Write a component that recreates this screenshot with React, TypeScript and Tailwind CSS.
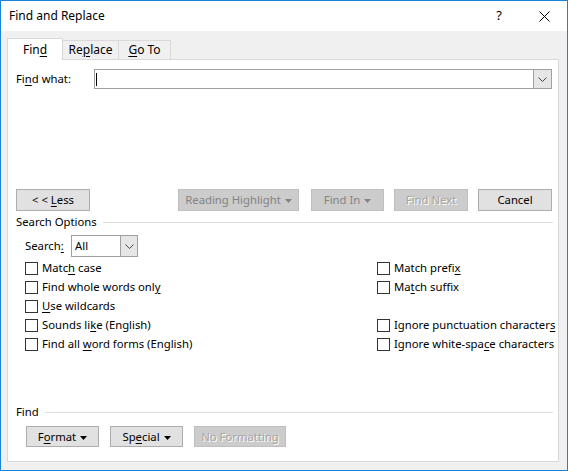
import React from 'react';

const font = "font-['Segoe_UI','Noto_Sans',sans-serif]";

function Key({ children }: { children: React.ReactNode }) {
  return <span className="underline underline-offset-2 decoration-1">{children}</span>;
}

function Caret({ color = '#000' }: { color?: string }) {
  return (
    <svg width="7" height="4" viewBox="0 0 7 4" className="ml-[4px] inline-block align-middle">
      <path d="M0 0h7L3.5 4z" fill={color} />
    </svg>
  );
}

function Chevron() {
  return (
    <svg width="9" height="5" viewBox="0 0 9 5">
      <path d="M0.5 0.5L4.5 4.5L8.5 0.5" fill="none" stroke="#444" strokeWidth="1" />
    </svg>
  );
}

function Btn({
  children,
  w,
  h = 'h-[22px]',
  state = 'normal',
}: {
  children: React.ReactNode;
  w: string;
  h?: string;
  state?: 'normal' | 'disabled' | 'embossed';
}) {
  const look =
    state === 'normal'
      ? 'bg-[#e1e1e1] border-[#adadad] text-black'
      : state === 'disabled'
        ? 'bg-[#cccccc] border-[#bfbfbf] text-[#838383]'
        : 'bg-[#cccccc] border-[#bfbfbf] text-[#a6a6a6] [text-shadow:1px_1px_0_#fff]';
  return (
    <div className={`${w} ${h} ${look} border flex items-center justify-center leading-none`}>
      <span className="whitespace-pre">{children}</span>
    </div>
  );
}

function Check({ children }: { children: React.ReactNode }) {
  return (
    <div className="h-[19px] flex items-center gap-[4px] whitespace-nowrap">
      <div className="w-[13px] h-[13px] shrink-0 border border-[#333] bg-white" />
      <span>{children}</span>
    </div>
  );
}

export default function App() {
  return (
    <div className={`${font} w-[568px] h-[471px] border border-[#1883d7] flex flex-col text-[11.3px] text-black`}>
      <div className="h-[30px] bg-white flex items-center pl-[8px] pr-[17px]">
        <span className="text-[12px]">Find and Replace</span>
        <span className="ml-auto mr-[37px] text-[13px]">?</span>
        <svg width="11" height="11" viewBox="0 0 11 11">
          <path d="M0.5 0.5L10.5 10.5M10.5 0.5L0.5 10.5" stroke="#000" strokeWidth="1" />
        </svg>
      </div>
      <div className="flex-1 bg-[#f0f0f0] pl-[6px] pr-[8px] pb-[8px] flex flex-col">
        <div className="flex items-end h-[21px] mt-[7px]">
          <div className="w-[56px] h-[22px] bg-white border border-b-0 border-[#d9d9d9] flex items-center justify-center relative z-10 -mb-px text-[12px]">
            <span>
              Fin<Key>d</Key>
            </span>
          </div>
          <div className="w-[56px] h-[19px] border border-l-0 border-[#d9d9d9] border-b-0 flex items-center justify-center text-[12px]">
            <span>
              Re<Key>p</Key>lace
            </span>
          </div>
          <div className="w-[52px] h-[19px] border border-l-0 border-[#d9d9d9] border-b-0 flex items-center justify-center text-[12px]">
            <span>
              <Key>G</Key>o To
            </span>
          </div>
        </div>
        <div className="flex-1 bg-white border border-[#d9d9d9] flex flex-col pl-[8px] pr-[6px]">
          <div className="mt-[9px] h-[20px] flex items-center">
            <span className="w-[78px]">
              Fi<Key>n</Key>d what:
            </span>
            <div className="flex-1 h-[20px] border border-[#a0a0a0] flex items-center">
              <div className="ml-[1px] w-px h-[13px] bg-black" />
              <div className="ml-auto h-full w-[18px] bg-[#e6e6e6] border-l border-[#a0a0a0] flex items-center justify-center">
                <Chevron />
              </div>
            </div>
          </div>

          <div className="mt-[100px] flex">
            <Btn w="w-[74px]">
              &lt; &lt; <Key>L</Key>ess
            </Btn>
            <div className="ml-auto" />
            <Btn w="w-[121px]" state="disabled">
              Reading Highlight
              <Caret color="#838383" />
            </Btn>
            <div className="w-[12px]" />
            <Btn w="w-[73px]" state="disabled">
              Find In
              <Caret color="#838383" />
            </Btn>
            <div className="w-[10px]" />
            <Btn w="w-[74px]" state="embossed">
              Find Next
            </Btn>
            <div className="w-[10px]" />
            <Btn w="w-[74px]">Cancel</Btn>
          </div>

          <div className="mt-[3px] h-[16px] flex items-center gap-[6px] -mr-px">
            <span>Search Options</span>
            <div className="flex-1 h-px bg-[#dcdcdc]" />
          </div>

          <div className="mt-[5px] ml-[9px] flex items-center">
            <span className="w-[46px]">
              Search<Key>:</Key>
            </span>
            <div className="w-[67px] h-[22px] border border-[#a0a0a0] bg-white flex items-center">
              <span className="pl-[3px]">All</span>
              <div className="ml-auto h-full w-[17px] bg-[#e6e6e6] border-l border-[#a0a0a0] flex items-center justify-center">
                <Chevron />
              </div>
            </div>
          </div>

          <div className="mt-[2px] ml-[9px] flex">
            <div className="flex flex-col">
              <Check>
                Matc<Key>h</Key> case
              </Check>
              <Check>
                Find whole words onl<Key>y</Key>
              </Check>
              <Check>
                <Key>U</Key>se wildcards
              </Check>
              <Check>
                Sounds li<Key>k</Key>e (English)
              </Check>
              <Check>
                Find all <Key>w</Key>ord forms (English)
              </Check>
            </div>
            <div className="ml-auto w-[175px] flex flex-col">
              <Check>
                Match prefi<Key>x</Key>
              </Check>
              <Check>
                Ma<Key>t</Key>ch suffix
              </Check>
              <div className="h-[19px]" />
              <Check>
                Ignore punctuation character<Key>s</Key>
              </Check>
              <Check>
                Ignore white-spa<Key>c</Key>e characters
              </Check>
            </div>
          </div>

          <div className="mt-auto h-[16px] flex items-center gap-[6px] -mr-px">
            <span>Find</span>
            <div className="flex-1 h-px bg-[#dcdcdc]" />
          </div>
          <div className="mt-[6px] mb-[14px] ml-[10px] flex gap-[11px]">
            <Btn w="w-[73px]" h="h-[21px]">
              F<Key>o</Key>rmat
              <Caret />
            </Btn>
            <Btn w="w-[73px]" h="h-[21px]">
              Sp<Key>e</Key>cial
              <Caret />
            </Btn>
            <Btn w="w-[92px]" h="h-[21px]" state="embossed">
              No Formatting
            </Btn>
          </div>
        </div>
      </div>
    </div>
  );
}
